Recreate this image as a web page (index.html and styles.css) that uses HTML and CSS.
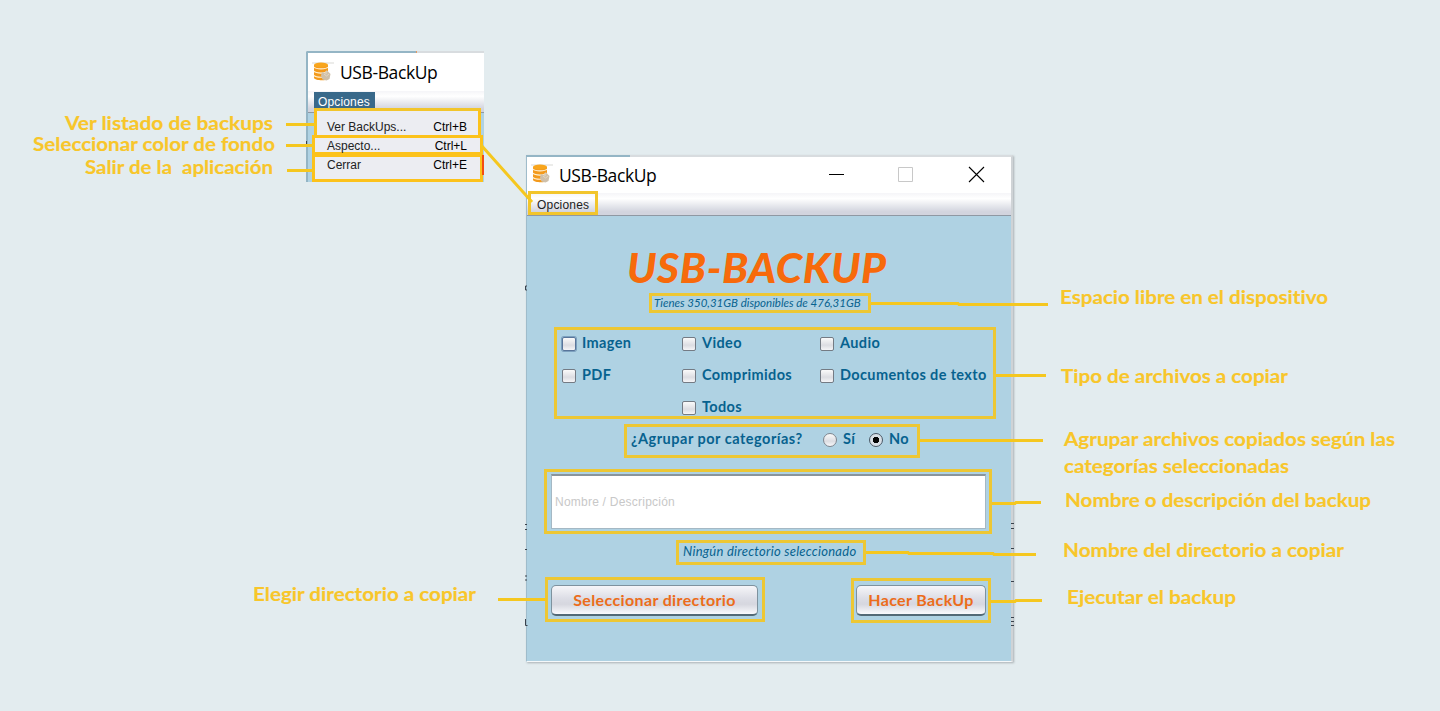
FILE: index.html
```html
<!DOCTYPE html>
<html lang="es">
<head>
<meta charset="utf-8">
<title>USB-BackUp</title>
<link rel="stylesheet" href="styles.css">
</head>
<body>
<svg width="0" height="0" class="defs">
  <symbol id="logo" viewBox="0 0 22 20">
    <path d="M0 1h22" stroke="#ececea" stroke-width="2"/>
    <path d="M2 3v13c1 2.500 11 3 14 1V3z" fill="#f39a1c"/>
    <ellipse cx="9" cy="3" rx="7" ry="2.500" fill="#f8a51c"/>
    <path d="M2 5c2 2.500 12 2.500 14 0M2 9.200c2 2.500 12 2.500 14 0M2 13.400c2 2.500 12 2.500 14 0" fill="none" stroke="#fff0d2" stroke-width="1.100"/>
    <path d="M10 10l3 1 1.500-3 2 2 2 2-1 5-3 1.500-4-1-1.500-4z" fill="#cfc0aa"/>
    <path d="M14 9v3M12 12l2.500 2 2.500-2" fill="none" stroke="#e5d8c2" stroke-width="1"/>
  </symbol>
</svg>
<main class="canvas">
  <section class="menu-window">
    <header class="titlebar"><svg class="logo"><use href="#logo"/></svg><span class="wtitle">USB-BackUp</span></header>
    <nav class="menubar"><span class="selected">Opciones</span></nav>
    <div class="menu">
      <div class="item first"><span>Ver BackUps...</span><span>Ctrl+B</span></div>
      <div class="item"><span>Aspecto...</span><span>Ctrl+L</span></div>
      <div class="item last"><span>Cerrar</span><span>Ctrl+E</span></div>
    </div>
    <i class="orange-bit"></i>
  </section>

  <section class="window">
    <header class="titlebar"><svg class="logo"><use href="#logo"/></svg><span class="wtitle">USB-BackUp</span>
      <svg class="controls" width="160" height="20" viewBox="0 0 160 20"><path d="M2 9.500h15" stroke="#000"/><path d="M71.500 2.500h14v14h-14z" fill="none" stroke="#c8c8c8"/><path d="M142 2l15 15M157 2l-15 15" stroke="#000" stroke-width="1.100"/></svg>
    </header>
    <nav class="menubar"><span class="opt">Opciones</span></nav>
    <div class="content">
      <h1>USB-BACKUP</h1>
      <p class="mark space"><span>Tienes 350,31GB disponibles de 476,31GB</span></p>
      <div class="mark types">
        <label><i class="check focus"></i><span>Imagen</span></label>
        <label><i class="check"></i><span>Video</span></label>
        <label><i class="check"></i><span>Audio</span></label>
        <label><i class="check"></i><span>PDF</span></label>
        <label><i class="check"></i><span>Comprimidos</span></label>
        <label><i class="check"></i><span>Documentos de texto</span></label>
        <label class="all"><i class="check"></i><span>Todos</span></label>
      </div>
      <div class="mark group"><span class="question">¿Agrupar por categorías?</span><label><i class="radio"></i><span>Sí</span></label><label><i class="radio on"></i><span>No</span></label></div>
      <div class="mark field"><div class="textarea">Nombre / Descripción</div></div>
      <p class="mark dir"><span>Ningún directorio seleccionado</span></p>
      <div class="actions">
        <div class="mark b1"><div class="button">Seleccionar directorio</div></div>
        <div class="mark b2"><div class="button">Hacer BackUp</div></div>
      </div>
    </div>
  </section>

  <svg class="notes" width="1440" height="711" viewBox="0 0 1440 711">
    <g class="debris">
      <path d="M527 286h-1.500v4h1.500M525 524.500h2M525 529.500h2M525 549.500h2M525 576h2M525 580h2M525.500 619v6.500h2M1011 523.500h3M1011 528.500h3M1011 548.500h3M1011 581.500h3M1011 617.500h3M1011 621.500h3M1011 625.500h3M306.500 141v3"/>
    </g>
    <g class="lines">
      <path d="M286 124.500h30M286 145.500h28M287 170.500h28M481 145L532 202M871 303.500h87l1 1h89M996 375.500h50M920 440.500h123M992 503.500h23l1-1h25M866 552.500h42l1 1h84l1 1h42M990 601.500h25l1-1h26M498 599.500h49"/>
    </g>
    <g class="labels">
      <text x="65" y="130" textLength="208" lengthAdjust="spacingAndGlyphs">Ver listado de backups</text>
      <text x="33" y="151" textLength="242" lengthAdjust="spacingAndGlyphs">Seleccionar color de fondo</text>
      <text x="85" y="174" textLength="188" lengthAdjust="spacingAndGlyphs" xml:space="preserve">Salir de la  aplicación</text>
      <text x="253" y="601" textLength="223" lengthAdjust="spacingAndGlyphs">Elegir directorio a copiar</text>
      <text x="1060" y="304" textLength="268" lengthAdjust="spacingAndGlyphs">Espacio libre en el dispositivo</text>
      <text x="1061" y="383" textLength="227" lengthAdjust="spacingAndGlyphs">Tipo de archivos a copiar</text>
      <text x="1064" y="446" textLength="331" lengthAdjust="spacingAndGlyphs">Agrupar archivos copiados según las</text>
      <text x="1064" y="473" textLength="225" lengthAdjust="spacingAndGlyphs">categorías seleccionadas</text>
      <text x="1065" y="507" textLength="306" lengthAdjust="spacingAndGlyphs">Nombre o descripción del backup</text>
      <text x="1063" y="557" textLength="281" lengthAdjust="spacingAndGlyphs">Nombre del directorio a copiar</text>
      <text x="1067" y="604" textLength="169" lengthAdjust="spacingAndGlyphs">Ejecutar el backup</text>
    </g>
  </svg>
</main>
</body>
</html>
```

FILE: styles.css
```css
* { box-sizing: border-box; }
body { margin: 0; background: #e3ecef; font-family: "Liberation Sans", Arial, sans-serif; font-size: 12px; color: #222; }
.defs { position: absolute; }
.canvas { position: relative; width: 1440px; height: 711px; overflow: hidden; }
h1, p { margin: 0; }
i { font-style: normal; }

.window, .menu-window { position: absolute; }
.window { left: 526px; top: 155px; width: 487px; height: 507px; border-top: 2px solid #d8dcdf; border-left: 1px solid #9fbccb; border-right: 2px solid #cfd3d6; border-bottom: 1px solid #f4f8fa; box-shadow: 1px 1px 2px #aab0b4; background: #fff; }
.window::before, .menu-window::before { content: ""; position: absolute; left: -1px; top: -2px; height: 2px; background: #94b5c5; }
.window::before { width: 104px; }
.menu-window { left: 306px; top: 51px; width: 178px; height: 131px; border-top: 2px solid #d8dcdf; border-left: 2px solid #94b5c5; background: #afd2e3; }
.menu-window::before { width: 109px; border-right: 1px solid #e59a62; }
.titlebar { display: flex; align-items: center; height: 36px; background: #fff; padding: 0 0 0 4px; }
.menu-window .titlebar { height: 38px; }
.logo { width: 22px; height: 20px; flex: none; }
.window .logo { margin-top: -2px; }
.wtitle { font: 17.5px/24px "Open Sans", "Noto Sans", sans-serif; letter-spacing: -0.4px; color: #000; margin-left: 6px; white-space: nowrap; }
.window .wtitle { margin-top: -1px; }
.controls { margin-left: auto; margin-right: 24px; }
.menubar { display: flex; height: 23px; background: linear-gradient(#f5f5f8 0, #fff 25%, #d2d4de 85%); border-bottom: 1px solid #8f98a3; }
.menu-window .menubar { height: 22px; letter-spacing: 0.15px; }
.selected { background: #39698a; color: #fff; margin: 1px 0 0 6px; width: 61px; padding: 2px 4px; height: 17px; line-height: 17px; }
.opt { border: 3px solid #f2c52c; width: 70px; height: 24px; margin: -2px 0 0 1px; line-height: 22px; padding-left: 6px; letter-spacing: 0.2px; position: relative; }
.menu { width: 171px; margin: -5px 0 0 4px; position: relative; }
.item { display: flex; justify-content: space-between; align-items: center; border: 3px solid #fcc21b; background: #ecedf2; color: #222; height: 20px; padding: 2px 13px 0 12px; margin-top: -3px; width: 171px; }
.item span + span { color: #000; }
.item.first { height: 30px; width: 167px; margin: 0 0 0 2px; padding: 8px 11px 0 10px; border-top-color: #f2c52c; }
.item.last { height: 28px; margin-top: -1px; padding-top: 0; padding-bottom: 7px; }
.orange-bit { position: absolute; right: 0; bottom: 7px; width: 2px; height: 20px; background: #f34d12; }

.content { background: #afd2e3; height: 445px; display: flex; flex-direction: column; color: #07628f; font: bold 14.5px/20px Lato, Carlito, sans-serif; letter-spacing: 0.37px; font-variant-ligatures: none; }
.content h1 { font: italic 900 42.5px/50px Lato, sans-serif; letter-spacing: 0.6px; color: #f76a0b; margin: 26px 0 1px 100px; height: 50px; white-space: nowrap; }
.mark { border: 3px solid #edc734; white-space: nowrap; }
.space { width: 222px; height: 20px; margin-left: 122px; font: italic 11.5px/14px Lato, sans-serif; letter-spacing: 0; padding-left: 2px; }
.types { display: grid; grid-template-columns: 120px 138px auto; grid-template-rows: 32px 32px 22px; width: 442px; height: 92px; margin: 14px 0 0 27px; padding-left: 5px; }
.types label { display: flex; height: 20px; align-items: center; margin-top: 3px; gap: 6px; }
.types .all { grid-column: 2; }
.check { width: 14px; height: 14px; border: 1px solid #747b84; border-radius: 2px; background: linear-gradient(#fafafa, #dcdde2 60%, #f5f5f7); position: relative; top: 1px; }
.check.focus { box-shadow: 0 0 0 1px #7ca0be; border-color: #58759a; }
.group { display: flex; align-items: center; width: 296px; height: 34px; margin: 5px 0 0 97px; padding: 0 0 4px 4px; }
.group label { display: flex; align-items: center; gap: 6px; width: 46px; }
.group .question { width: 192px; letter-spacing: 0.5px; }
.radio { width: 14px; height: 14px; border-radius: 50%; border: 1px solid #7f858e; background: linear-gradient(#fafafa, #dcdde2 60%, #f8f8fa); position: relative; top: 1px; }
.radio.on { border-color: #4b5866; background: radial-gradient(circle, #050505 0 3px, #d8dfe6 3.5px); }
.field { width: 448px; height: 65px; margin: 11px 0 0 17px; padding: 2px 3px 3px 4px; }
.textarea { width: 435px; height: 55px; background: #fff; border: 1px solid #a5b8c4; border-top: 2px solid #8a959c; font: 12px/53px "Liberation Sans", sans-serif; letter-spacing: 0.23px; color: #c8c8c8; padding-left: 3px; }
.dir { width: 190px; height: 25px; margin: 6px 0 0 149px; padding-left: 4px; font: italic 13px/17px Lato, sans-serif; letter-spacing: 0.25px; }
.actions { display: flex; justify-content: space-between; margin: 12px 20px 0 18px; }
.b1 { width: 220px; height: 45px; padding: 5px 3px; }
.b2 { width: 140px; height: 45px; margin-top: 1px; padding: 4px 2px; }
.button { height: 31px; border: 1px solid #7e929e; border-bottom: 2px solid #536976; border-radius: 5px; background: linear-gradient(#f6f6f9, #dcdde5 45%, #d6d7df 65%, #fafafd); color: #ec6c1a; text-align: center; font-size: 16px; line-height: 27px; }
.b1 .button { width: 207px; }
.b2 .button { width: 130px; }
.notes { position: absolute; left: 0; top: 0; pointer-events: none; }
.lines path { fill: none; stroke: #f5c71f; stroke-width: 3; }
.debris path { fill: none; stroke: #39424c; stroke-width: 1; }
.labels { font: bold 19px Lato, Carlito, sans-serif; font-variant-ligatures: none; fill: #f8c62a; stroke: #f8c62a; stroke-width: 0.15px; }
```
